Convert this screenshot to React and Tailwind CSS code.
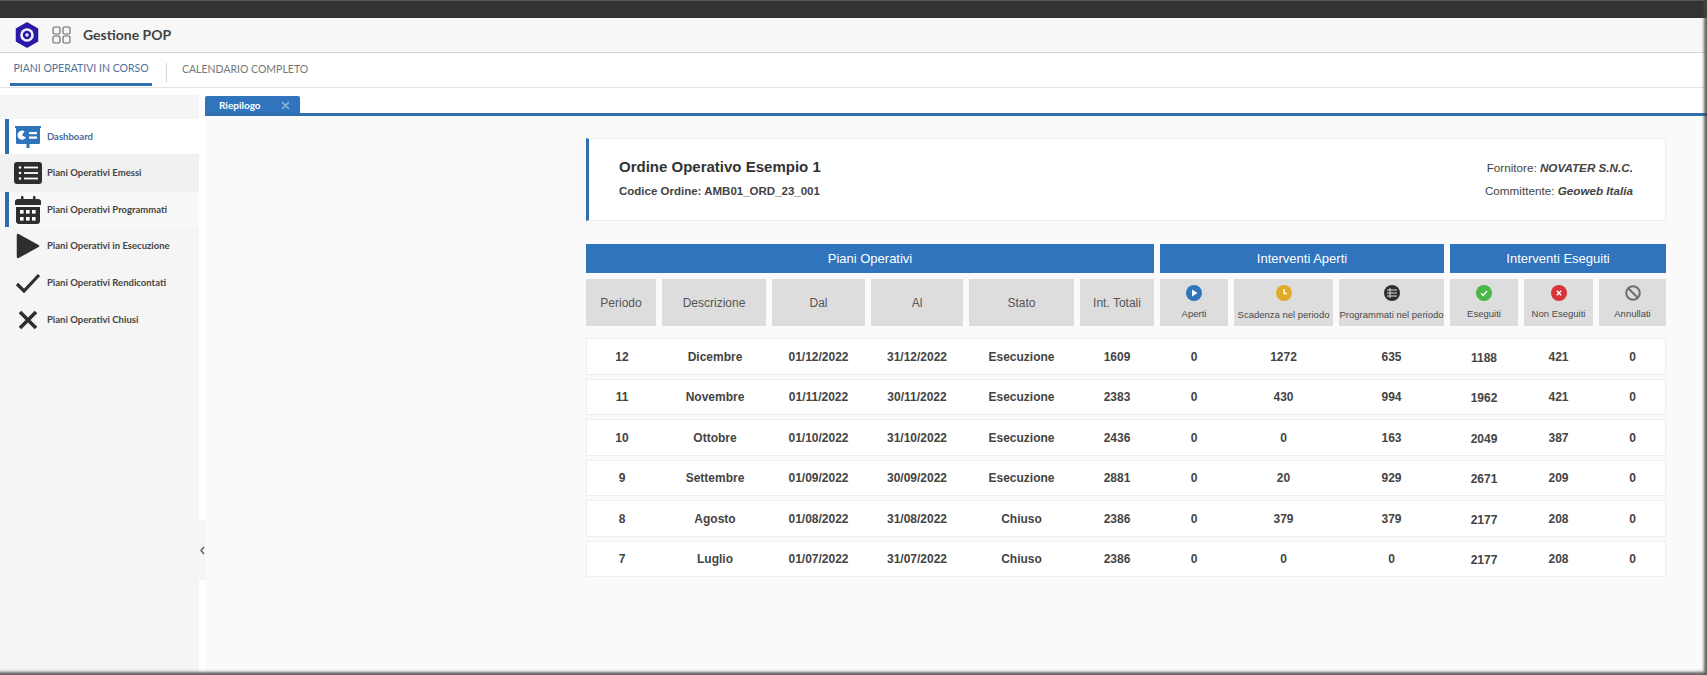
const GRID = "grid grid-cols-[70px_104px_93px_92px_105px_74px_68px_99px_105px_68px_69px_67px] gap-x-[6px]";

const rows = [
  ["12","Dicembre","01/12/2022","31/12/2022","Esecuzione","1609","0","1272","635","1188","421","0"],
  ["11","Novembre","01/11/2022","30/11/2022","Esecuzione","2383","0","430","994","1962","421","0"],
  ["10","Ottobre","01/10/2022","31/10/2022","Esecuzione","2436","0","0","163","2049","387","0"],
  ["9","Settembre","01/09/2022","30/09/2022","Esecuzione","2881","0","20","929","2671","209","0"],
  ["8","Agosto","01/08/2022","31/08/2022","Chiuso","2386","0","379","379","2177","208","0"],
  ["7","Luglio","01/07/2022","31/07/2022","Chiuso","2386","0","0","0","2177","208","0"],
];

const Logo = () => (
  <svg width="24" height="26" viewBox="0 0 24 26">
    <path d="M12 1 L22.5 7 V19 L12 25 L1.5 19 V7 Z" fill="#2a1aa8" stroke="#2a1aa8" strokeWidth="1.5" strokeLinejoin="round" />
    <circle cx="12" cy="13" r="6.8" fill="#eef0fa" />
    <circle cx="12" cy="13" r="4.2" fill="#2a1aa8" />
    <circle cx="12" cy="13" r="1.7" fill="#eef0fa" />
  </svg>
);

const GridIcon = () => (
  <svg width="19" height="18" viewBox="0 0 19 18" fill="none" stroke="#666" strokeWidth="1.1">
    <rect x="1" y="1" width="7" height="7" rx="1.5" />
    <rect x="11" y="1" width="7" height="7" rx="1.5" />
    <rect x="1" y="10" width="7" height="7" rx="1.5" />
    <rect x="11" y="10" width="7" height="7" rx="1.5" />
  </svg>
);

const DashIcon = () => (
  <svg width="26" height="28" viewBox="0 0 26 28">
    <rect x="0" y="3" width="26" height="2" fill="#2f74bd" />
    <rect x="1" y="4" width="24" height="17" rx="1" fill="#2f74bd" />
    <path d="M11.5 25 h3 v-5 h-3z" fill="#2f74bd" />
    <path d="M9.5 8.2 A4.6 4.6 0 1 0 11 14.5 L7 12.3 Z" fill="#fff" />
    <rect x="14" y="9" width="8" height="2.2" fill="#fff" />
    <rect x="14" y="13.5" width="8" height="2.2" fill="#fff" />
  </svg>
);

const ListIcon = () => (
  <svg width="28" height="23" viewBox="0 0 28 23">
    <rect x="0" y="0" width="28" height="22" rx="3" fill="#2e2e2e" />
    <circle cx="6" cy="5.5" r="1.3" fill="#fff" />
    <circle cx="6" cy="11" r="1.3" fill="#fff" />
    <circle cx="6" cy="16.5" r="1.3" fill="#fff" />
    <rect x="10" y="4.6" width="14" height="1.8" fill="#fff" />
    <rect x="10" y="10.1" width="14" height="1.8" fill="#fff" />
    <rect x="10" y="15.6" width="14" height="1.8" fill="#fff" />
  </svg>
);

const CalIcon = () => (
  <svg width="26" height="28" viewBox="0 0 26 28">
    <rect x="6" y="0" width="2.5" height="5" rx="1" fill="#2e2e2e" />
    <rect x="18" y="0" width="2.5" height="5" rx="1" fill="#2e2e2e" />
    <path d="M0 7 a3 3 0 0 1 3 -4 h20 a3 3 0 0 1 3 4 v2 H0z" fill="#2e2e2e" />
    <path d="M1 11 h24 v14 a3 3 0 0 1 -3 3 H4 a3 3 0 0 1 -3 -3z" fill="#2e2e2e" />
    {[5, 11, 17].map((x) => <rect key={x} x={x} y="14" width="3.6" height="3.6" fill="#fff" />)}
    {[5, 11, 17].map((x) => <rect key={x} x={x} y="21" width="3.6" height="3.6" fill="#fff" />)}
  </svg>
);

const PlayIcon = () => (
  <svg width="24" height="26" viewBox="0 0 24 26">
    <path d="M2 2 L22 13 L2 24 Z" fill="#2e2e2e" stroke="#2e2e2e" strokeWidth="2.5" strokeLinejoin="round" />
  </svg>
);

const CheckIcon = () => (
  <svg width="26" height="20" viewBox="0 0 26 20" fill="none">
    <path d="M2 11 L9 18 L24 2" stroke="#2e2e2e" strokeWidth="3.2" />
  </svg>
);

const XIcon = () => (
  <svg width="20" height="20" viewBox="0 0 20 20" fill="none">
    <path d="M2 2 L18 18 M18 2 L2 18" stroke="#2e2e2e" strokeWidth="3.6" />
  </svg>
);

const S = ({ children, fill }) => (
  <svg width="16" height="16" viewBox="0 0 16 16">
    <circle cx="8" cy="8" r="8" fill={fill} />
    {children}
  </svg>
);

const sideItems = [
  { label: "Dashboard", icon: <DashIcon />, h: "h-[35px]", bg: "bg-white", bar: true, color: "text-[#4a6da5]" },
  { label: "Piani Operativi Emessi", icon: <ListIcon />, h: "h-[38px]", bg: "bg-[#f1f1f1]" },
  { label: "Piani Operativi Programmati", icon: <CalIcon />, h: "h-[35px]", bg: "bg-[#f8f8f8]", bar: true },
  { label: "Piani Operativi in Esecuzione", icon: <PlayIcon />, h: "h-[38px]", bg: "" },
  { label: "Piani Operativi Rendicontati", icon: <CheckIcon />, h: "h-[36px]", bg: "" },
  { label: "Piani Operativi Chiusi", icon: <XIcon />, h: "h-[37px]", bg: "" },
];

const mainHeads = ["Periodo", "Descrizione", "Dal", "Al", "Stato", "Int. Totali"];
const iconHeads = [
  { t: "Aperti", i: <S fill="#2f74bd"><path d="M6 4.5 L11.5 8 L6 11.5Z" fill="#fff" /></S> },
  { t: "Scadenza nel periodo", low: true, i: <S fill="#e2ab27"><path d="M8 4 V8.5 H11" stroke="#fff" strokeWidth="1.4" fill="none" /></S> },
  { t: "Programmati nel periodo", low: true, i: <S fill="#2e2e2e"><path d="M3 5 H13 M3 8 H13 M3 11 H13 M6 3 V13" stroke="#ddd" strokeWidth="1" fill="none" /></S> },
  { t: "Eseguiti", i: <S fill="#4cb648"><path d="M5 8.2 L7.2 10.4 L11 6" stroke="#fff" strokeWidth="1.4" fill="none" /></S> },
  { t: "Non Eseguiti", i: <S fill="#d9343a"><path d="M5.8 5.8 L10.2 10.2 M10.2 5.8 L5.8 10.2" stroke="#fff" strokeWidth="1.4" fill="none" /></S> },
  { t: "Annullati", i: (
    <svg width="16" height="16" viewBox="0 0 16 16" fill="none" stroke="#6f6f6f" strokeWidth="2">
      <circle cx="8" cy="8" r="6.8" />
      <path d="M3.2 3.2 L12.8 12.8" />
    </svg>
  ) },
];

export default function App() {
  return (
    <div className="relative w-[1707px] h-[675px] overflow-hidden bg-white font-['Noto_Sans',sans-serif]">
      <div className="h-[18px] bg-[#333333] border-t border-[#555555]" />

      <header className="h-[35px] bg-[#f7f7f7] border-b border-[#d5d5d5] flex items-center pl-[15px]">
        <Logo />
        <span className="ml-[13px] flex"><GridIcon /></span>
        <span className="ml-[12px] font-['Lato',sans-serif] text-[14px] font-bold text-[#444444] leading-none">Gestione POP</span>
      </header>

      <nav className="h-[35px] bg-white border-b border-[#e3e3e3] flex items-stretch pl-[10px] font-['Lato',sans-serif] text-[10.5px] leading-none">
        <div className="w-[142px] h-[33px] flex items-center justify-center whitespace-nowrap text-[#4e7099] border-b-[3px] border-[#2f6fae]">PIANI OPERATIVI IN CORSO</div>
        <div className="w-px h-[20px] bg-[#d8d8d8] ml-[14px] mt-[10px]" />
        <div className="ml-[15px] h-[33px] flex items-center whitespace-nowrap text-[#777777]">CALENDARIO COMPLETO</div>
      </nav>

      <div className="flex h-[587px]">
        <aside className="relative w-[199px] mt-[7px] bg-[#f5f5f5] pt-[24px] font-['Lato',sans-serif]">
          {sideItems.map((it) => (
            <div key={it.label} className={`relative flex items-center ${it.h} ${it.bg}`}>
              {it.bar && <div className="absolute left-[5px] top-0 bottom-0 w-[4px] bg-[#2f6fae]" />}
              <div className="w-[47px] flex justify-center pl-[8px] shrink-0">{it.icon}</div>
              <span className={`text-[9.5px] font-bold leading-none whitespace-nowrap ${it.color || "text-[#444444]"}`}>{it.label}</span>
            </div>
          ))}
          <div className="absolute left-[199px] top-[425px] w-[6px] h-[60px] bg-[#f5f5f5] flex items-center justify-center">
            <svg width="5" height="9" viewBox="0 0 5 9" fill="none"><path d="M4 1 L1 4.5 L4 8" stroke="#555" strokeWidth="1.3" /></svg>
          </div>
        </aside>

        <main className="ml-[6px] flex-1 flex flex-col bg-[#fafafa]">
          <div className="bg-white">
            <div className="pt-[8px] flex">
              <div className="w-[95px] h-[17px] bg-[#2f74bd] rounded-t-[2px] flex items-center pl-[14px] font-['Lato',sans-serif] text-[10px] font-bold text-white leading-none">
                Riepilogo
                <svg className="ml-[20px] mt-[2px]" width="9" height="9" viewBox="0 0 9 9" fill="none"><path d="M1 1 L8 8 M8 1 L1 8" stroke="#8fb4da" strokeWidth="1.6" /></svg>
              </div>
            </div>
            <div className="h-[3px] bg-[#2f6fae]" />
          </div>

          <div className="pl-[381px] pt-[22px] font-['Liberation_Sans',sans-serif]">
            <section className="w-[1080px] h-[83px] bg-white border border-[#eeeeee] border-l-[3px] border-l-[#2f6fae] flex justify-between pl-[30px] pr-[32px] py-[19px]">
              <div>
                <div className="text-[15px] font-bold text-[#333333] leading-[18px]">Ordine Operativo Esempio 1</div>
                <div className="mt-[8px] text-[11.5px] font-bold text-[#444444] leading-[14px]">Codice Ordine: AMB01_ORD_23_001</div>
              </div>
              <div className="text-right text-[11.7px] text-[#444444] leading-[14px] pt-[3px]">
                <div>Fornitore: <b className="italic">NOVATER S.N.C.</b></div>
                <div className="mt-[9px]">Committente: <b className="italic">Geoweb Italia</b></div>
              </div>
            </section>

            <div className={`${GRID} w-[1080px] mt-[23px] text-white text-[13px] leading-none`}>
              <div className="col-span-6 h-[29px] bg-[#2f74bd] flex items-center justify-center">Piani Operativi</div>
              <div className="col-span-3 h-[29px] bg-[#2f74bd] flex items-center justify-center">Interventi Aperti</div>
              <div className="col-span-3 h-[29px] bg-[#2f74bd] flex items-center justify-center">Interventi Eseguiti</div>
            </div>

            <div className={`${GRID} w-[1080px] mt-[6px]`}>
              {mainHeads.map((h) => (
                <div key={h} className="h-[47px] bg-[#dddddd] flex items-center justify-center text-[12px] text-[#555555] leading-none">{h}</div>
              ))}
              {iconHeads.map((h) => (
                <div key={h.t} className="h-[47px] bg-[#dddddd] flex flex-col items-center pt-[6px]">
                  <span className="flex h-[16px]">{h.i}</span>
                  <span className={`${h.low ? "mt-[9px]" : "mt-[8px]"} text-[9.5px] text-[#4a4a4a] leading-none whitespace-nowrap`}>{h.t}</span>
                </div>
              ))}
            </div>

            <div className="w-[1080px] mt-[12px] flex flex-col gap-[4px]">
              {rows.map((r) => (
                <div key={r[0]} className={`${GRID} h-[36.5px] bg-white border border-[#eeeeee] items-center text-[12px] font-bold text-[#444444] leading-none pt-px`}>
                  {r.map((c, i) => (
                    <div key={i} className={`text-center ${i >= 2 ? "-ml-[2px]" : ""} ${i === 9 ? "pt-[2px]" : ""}`}>{c}</div>
                  ))}
                </div>
              ))}
            </div>
          </div>
        </main>
      </div>

      <div className="absolute inset-0 pointer-events-none shadow-[inset_-3px_-3px_3px_rgba(70,70,70,0.85)]" />
    </div>
  );
}
